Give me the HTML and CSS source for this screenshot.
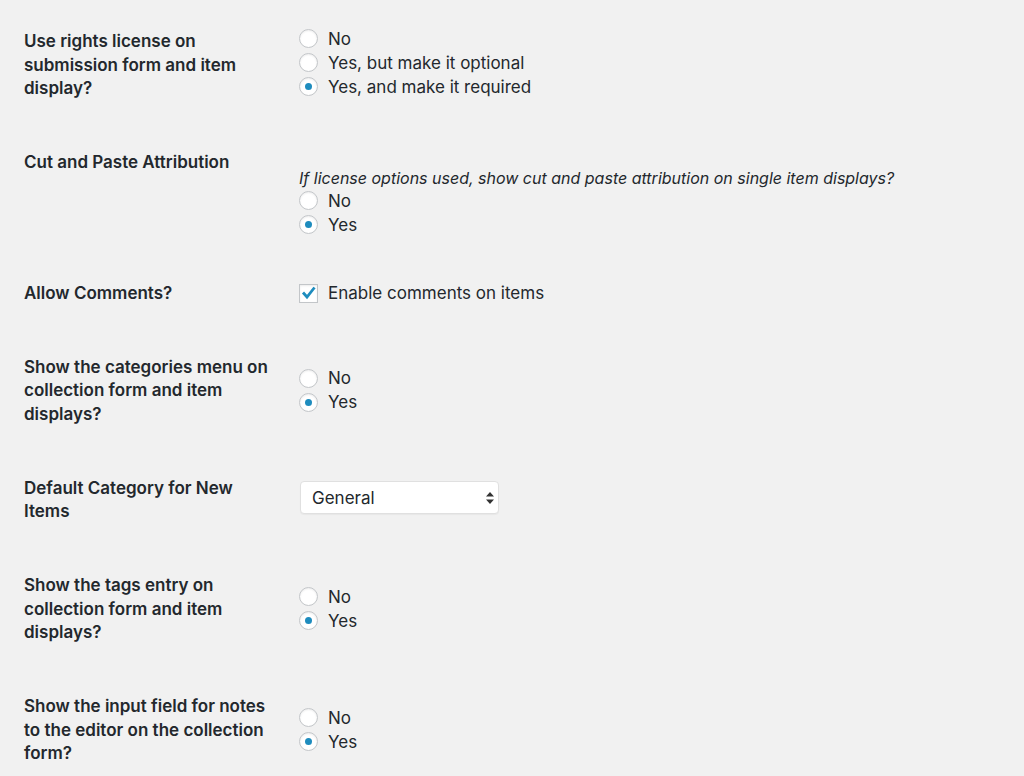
FILE: index.html
```html
<!DOCTYPE html>
<html lang="en">
<head>
<meta charset="utf-8">
<title>Settings</title>
<link rel="stylesheet" href="styles.css">
</head>
<body>
<div class="form-table">
  <div class="field-row">
    <div class="field-label">Use rights license on submission form and item display?</div>
    <div class="field-control ctl-first">
      <label class="choice"><input type="radio" name="license"> <span>No</span></label>
      <label class="choice"><input type="radio" name="license"> <span>Yes, but make it optional</span></label>
      <label class="choice"><input type="radio" name="license" checked> <span>Yes, and make it required</span></label>
    </div>
  </div>

  <div class="field-row">
    <div class="field-label">Cut and Paste Attribution</div>
    <div class="field-control ctl-desc">
      <p class="description">If license options used, show cut and paste attribution on single item displays?</p>
      <label class="choice"><input type="radio" name="attr"> <span>No</span></label>
      <label class="choice"><input type="radio" name="attr" checked> <span>Yes</span></label>
    </div>
  </div>

  <div class="field-row">
    <div class="field-label">Allow Comments?</div>
    <div class="field-control ctl-inline">
      <label class="choice"><span class="checkbox"><svg viewBox="0 0 17 17" width="17" height="17"><polyline points="3,7.5 7,12 14.5,2.5" fill="none" stroke="#1e8cbe" stroke-width="2.8"/></svg></span> <span>Enable comments on items</span></label>
    </div>
  </div>

  <div class="field-row">
    <div class="field-label">Show the categories menu on collection form and item displays?</div>
    <div class="field-control">
      <label class="choice"><input type="radio" name="cats"> <span>No</span></label>
      <label class="choice"><input type="radio" name="cats" checked> <span>Yes</span></label>
    </div>
  </div>

  <div class="field-row">
    <div class="field-label">Default Category for New Items</div>
    <div class="field-control ctl-select">
      <div class="select-wrap">
        <select class="select">
          <option>General</option>
        </select>
        <svg class="select-arrows" viewBox="0 0 8 12" width="8" height="12"><path d="M4 0 L8 4.6 L0 4.6 Z M0 7.4 L8 7.4 L4 12 Z" fill="#333"/></svg>
      </div>
    </div>
  </div>

  <div class="field-row">
    <div class="field-label">Show the tags entry on collection form and item displays?</div>
    <div class="field-control">
      <label class="choice"><input type="radio" name="tags"> <span>No</span></label>
      <label class="choice"><input type="radio" name="tags" checked> <span>Yes</span></label>
    </div>
  </div>

  <div class="field-row">
    <div class="field-label">Show the input field for notes to the editor on the collection form?</div>
    <div class="field-control">
      <label class="choice"><input type="radio" name="notes"> <span>No</span></label>
      <label class="choice"><input type="radio" name="notes" checked> <span>Yes</span></label>
    </div>
  </div>
</div>
</body>
</html>
```

FILE: styles.css
```css
html, body {
  margin: 0;
  padding: 0;
  background: #f1f1f1;
}

body {
  font-family: Inter, "Noto Sans", "Liberation Sans", sans-serif;
  font-size: 17px;
  color: #23282d;
}

.form-table {
  padding: 4.75px 0 0 24px;
}

.field-row {
  display: flex;
  align-items: flex-start;
}

.field-label {
  box-sizing: border-box;
  width: 275px;
  flex: none;
  padding: 25.25px 25px 25.25px 0;
  font-weight: 600;
  line-height: 23.5px;
}

.field-control {
  padding: 36px 0 18px 0;
  display: flex;
  flex-direction: column;
}

.ctl-first { padding-top: 22px; }
.ctl-inline { padding-top: 25px; }
.ctl-desc { padding-top: 41px; padding-bottom: 19.5px; }
.ctl-select { padding-top: 30px; padding-left: 1px; }

.description {
  margin: 0;
  font-style: italic;
  line-height: 22px;
  font-size: 16px;
}

.choice {
  display: flex;
  align-items: center;
  height: 24px;
  line-height: 24px;
  white-space: nowrap;
}

.choice input[type="radio"] {
  appearance: none;
  -webkit-appearance: none;
  box-sizing: border-box;
  width: 19px;
  height: 19px;
  margin: 0 10px 0 0;
  border: 1px solid #c3c6c9;
  border-radius: 50%;
  background: #fff;
  box-shadow: inset 0 1px 2px rgba(0, 0, 0, 0.08);
  display: flex;
  align-items: center;
  justify-content: center;
  flex: none;
}

.choice input[type="radio"]:checked::before {
  content: "";
  width: 7px;
  height: 7px;
  border-radius: 50%;
  background: #1e8cbe;
}

.checkbox {
  box-sizing: border-box;
  width: 19px;
  height: 19px;
  margin-right: 10px;
  border: 1px solid #c3c6c9;
  background: #fff;
  box-shadow: inset 0 1px 2px rgba(0, 0, 0, 0.08);
  display: flex;
  align-items: center;
  justify-content: center;
  flex: none;
}

.select-wrap {
  position: relative;
  width: 199px;
  height: 33px;
}

.select {
  appearance: none;
  -webkit-appearance: none;
  box-sizing: border-box;
  width: 199px;
  height: 33px;
  margin: 0;
  padding: 0 24px 0 11px;
  border: 1px solid #e0e0e0;
  border-radius: 4px;
  background: #fff;
  box-shadow: 0 1px 1px rgba(0, 0, 0, 0.04);
  font-family: inherit;
  font-size: 17px;
  color: #23282d;
}

.select-arrows {
  position: absolute;
  right: 5px;
  top: 11px;
}
```
